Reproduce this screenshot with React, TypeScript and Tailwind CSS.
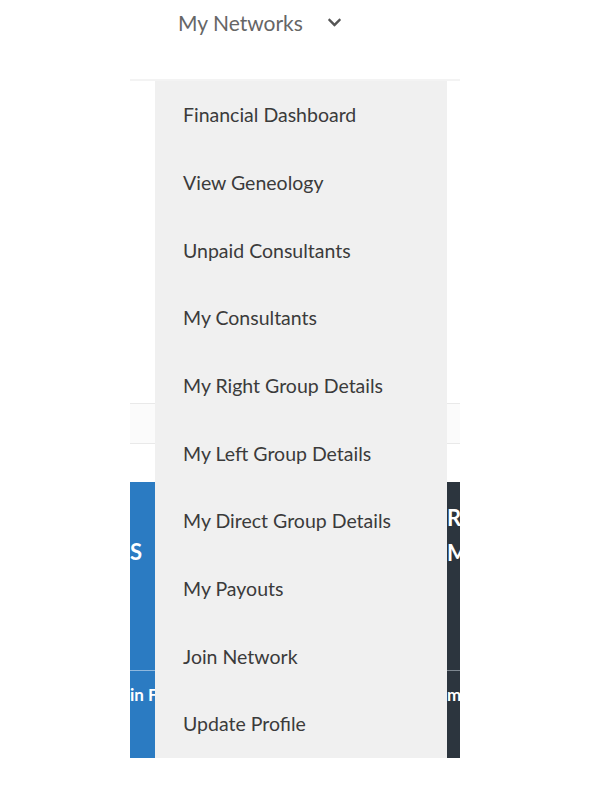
import React from "react";
import { FaChevronDown } from "react-icons/fa";

const items = [
  "Financial Dashboard",
  "View Geneology",
  "Unpaid Consultants",
  "My Consultants",
  "My Right Group Details",
  "My Left Group Details",
  "My Direct Group Details",
  "My Payouts",
  "Join Network",
  "Update Profile",
];

export default function App() {
  return (
    <div
      className="relative w-[600px] h-[804px] bg-white overflow-hidden"
      style={{ fontFamily: "Lato, 'Open Sans', sans-serif" }}
    >
      {/* header */}
      <div className="h-[79px] pl-[178px] pt-[8px] flex items-start">
        <div className="flex items-center h-[28px] gap-[24px]">
          <span className="text-[21px] text-[#666666] leading-none">My Networks</span>
          <FaChevronDown className="text-[#555555] w-[15px] h-[15px]" />
        </div>
      </div>

      {/* page body behind dropdown */}
      <div className="ml-[130px] w-[330px] border-t-2 border-[#f3f3f3]">
        <div className="h-[322px]" />
        <div className="h-[41px] bg-[#fbfbfb] border-y border-[#e9e9e9]" />
        <div className="h-[38px]" />
        <div className="flex h-[276px] overflow-hidden justify-between">
          <div className="w-[150px] bg-[#2b7bc2] flex flex-col text-white font-bold">
            <div className="h-[189px] border-b border-[#8fb8de] pt-[59px]">
              <span className="text-[22px] leading-none">S</span>
            </div>
            <div className="flex-1 pt-[12px]">
              <span className="text-[17px] leading-none whitespace-nowrap">in Fee</span>
            </div>
          </div>
          <div className="w-[150px] bg-[#2c353e] flex flex-col text-white font-bold items-end">
            <div className="h-[189px] w-full border-b border-[#7e8790] flex flex-col pt-[18px] pl-[137px]">
              <span className="text-[22px] leading-[35px]">R</span>
              <span className="text-[22px] leading-[35px]">M</span>
            </div>
            <div className="flex-1 w-full pt-[12px] pl-[137px]">
              <span className="text-[17px] leading-none">m</span>
            </div>
          </div>
        </div>
      </div>

      {/* dropdown overlay */}
      <div className="absolute left-[155px] top-[81px] w-[292px] h-[677px] bg-[#f0f0f0] flex flex-col">
        {items.map((t) => (
          <div
            key={t}
            className="h-[67.7px] flex items-center pl-[28px] text-[19.5px] text-[#3b3b3b]"
          >
            {t}
          </div>
        ))}
      </div>
    </div>
  );
}
